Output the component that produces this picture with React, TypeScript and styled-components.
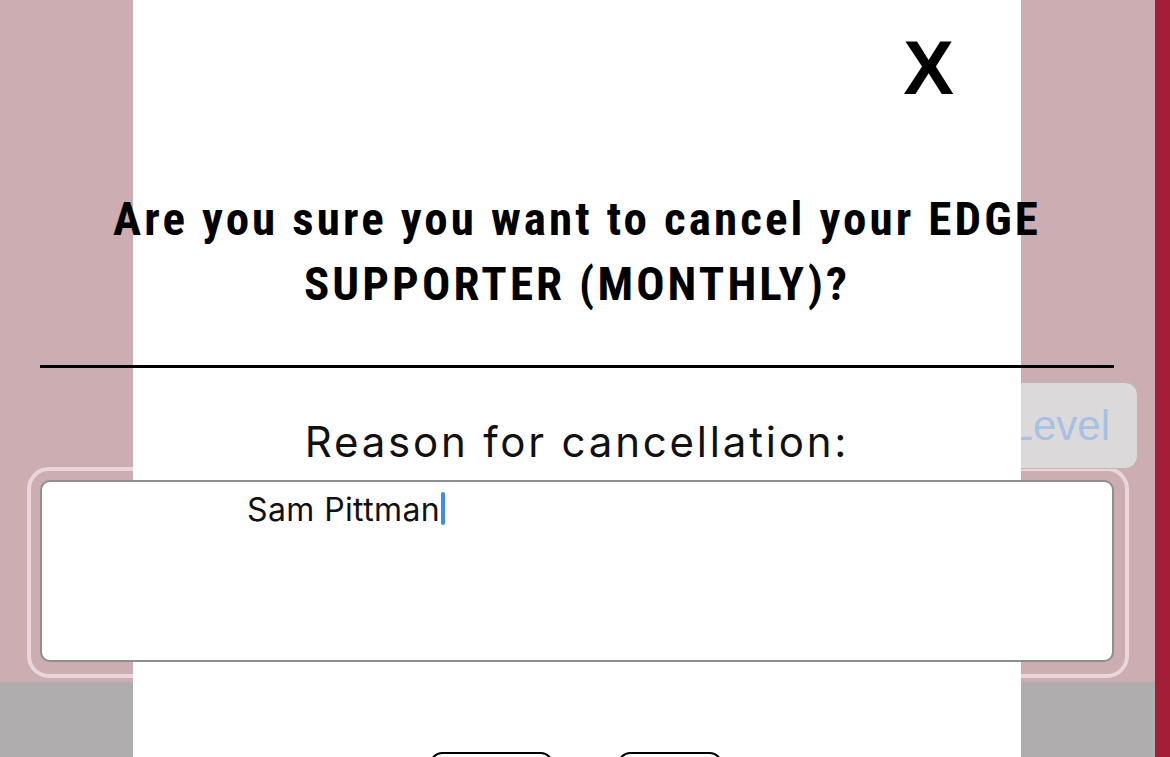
import * as React from 'react';
import styled, { createGlobalStyle } from 'styled-components';

const GlobalStyle = createGlobalStyle`
  html, body {
    margin: 0;
    padding: 0;
    background: #b0adae;
  }
  * {
    box-sizing: border-box;
  }
`;

const Page = styled.div`
  position: relative;
  width: 1170px;
  height: 757px;
  overflow: hidden;
  display: grid;
  grid-template-columns: 1fr 15px;
`;

const Backdrop = styled.div`
  display: grid;
  grid-template-rows: 682px 1fr;
`;

const PinkArea = styled.div`
  background: #cbadb2;
`;

const GrayArea = styled.div`
  background: #b0adae;
`;

const RedStrip = styled.div`
  background: #a51e37;
`;

// focused input ring from the page behind the modal
const FocusRing = styled.div`
  position: absolute;
  left: 27px;
  top: 467px;
  width: 1102px;
  height: 211px;
  border: 4px solid #e8d6da;
  border-radius: 22px;
`;

const LevelButton = styled.div`
  position: absolute;
  left: 980px;
  top: 382px;
  width: 158px;
  height: 87px;
  display: flex;
  align-items: center;
  justify-content: flex-end;
  padding-right: 27px;
  background: #dcd9db;
  border: 1px solid #c4b3b7;
  border-radius: 13px;
  color: #a8c0e2;
  font-family: 'Liberation Sans', Arial, sans-serif;
  font-size: 42px;
`;

const Modal = styled.div`
  position: absolute;
  left: 133px;
  top: 0;
  width: 888px;
  height: 800px;
  background: #ffffff;
  display: flex;
  flex-direction: column;
  align-items: center;
`;

const CloseRow = styled.div`
  align-self: stretch;
  display: flex;
  justify-content: flex-end;
  padding: 30px 67px 0 0;
`;

const CloseButton = styled.button`
  border: none;
  background: none;
  padding: 0;
  font-family: 'Liberation Sans', Arial, sans-serif;
  font-weight: 700;
  font-size: 76px;
  line-height: 76px;
  color: #000;
  cursor: pointer;
`;

const Content = styled.div`
  width: 1074px;
  flex-shrink: 0;
  display: flex;
  flex-direction: column;
  align-items: center;
`;

const Title = styled.h2`
  margin: 80px 0 0;
  width: 980px;
  text-align: center;
  font-family: 'Roboto Condensed', Roboto, sans-serif;
  font-stretch: 75%;
  font-weight: 700;
  font-size: 47px;
  line-height: 65px;
  letter-spacing: 3.1px;
  color: #000;
`;

const Divider = styled.hr`
  align-self: stretch;
  margin: 49px 0 0;
  border: none;
  height: 3px;
  background: #000;
`;

const Label = styled.label`
  margin-top: 49px;
  font-family: Inter, 'Noto Sans', sans-serif;
  font-size: 42px;
  line-height: 50px;
  letter-spacing: 2.8px;
  color: #111;
`;

const ReasonBox = styled.div`
  margin-top: 13px;
  align-self: stretch;
  height: 182px;
  border: 2px solid #8e8e8e;
  border-radius: 10px;
  background: #fff;
  padding: 9px 0 0 205px;
  font-family: Inter, 'Noto Sans', sans-serif;
  font-size: 32px;
  line-height: 38px;
  letter-spacing: 0.4px;
  color: #111;
  display: flex;
  align-items: flex-start;
`;

const Caret = styled.span`
  display: inline-block;
  width: 4px;
  height: 33px;
  margin: 1px 0 0 1px;
  border-radius: 2px;
  background: #3e8af5;
`;

const ButtonRow = styled.div`
  margin-top: 90px;
  display: flex;
  gap: 65px;
  margin-left: -2px;
`;

const ActionButton = styled.button<{ $w: number }>`
  width: ${p => p.$w}px;
  height: 50px;
  border: 2px solid #000;
  border-radius: 12px;
  background: #fff;
`;

export default function App() {
  return (
    <>
      <GlobalStyle />
      <Page>
        <Backdrop>
          <PinkArea />
          <GrayArea />
        </Backdrop>
        <RedStrip />
        <FocusRing />
        <LevelButton>Level</LevelButton>
        <Modal>
          <CloseRow>
            <CloseButton>X</CloseButton>
          </CloseRow>
          <Content>
            <Title>
              Are you sure you want to cancel your EDGE SUPPORTER (MONTHLY)?
            </Title>
            <Divider />
            <Label>Reason for cancellation:</Label>
            <ReasonBox>
              Sam Pittman
              <Caret />
            </ReasonBox>
            <ButtonRow>
              <ActionButton $w={123} aria-label="Yes" />
              <ActionButton $w={104} aria-label="No" />
            </ButtonRow>
          </Content>
        </Modal>
      </Page>
    </>
  );
}
